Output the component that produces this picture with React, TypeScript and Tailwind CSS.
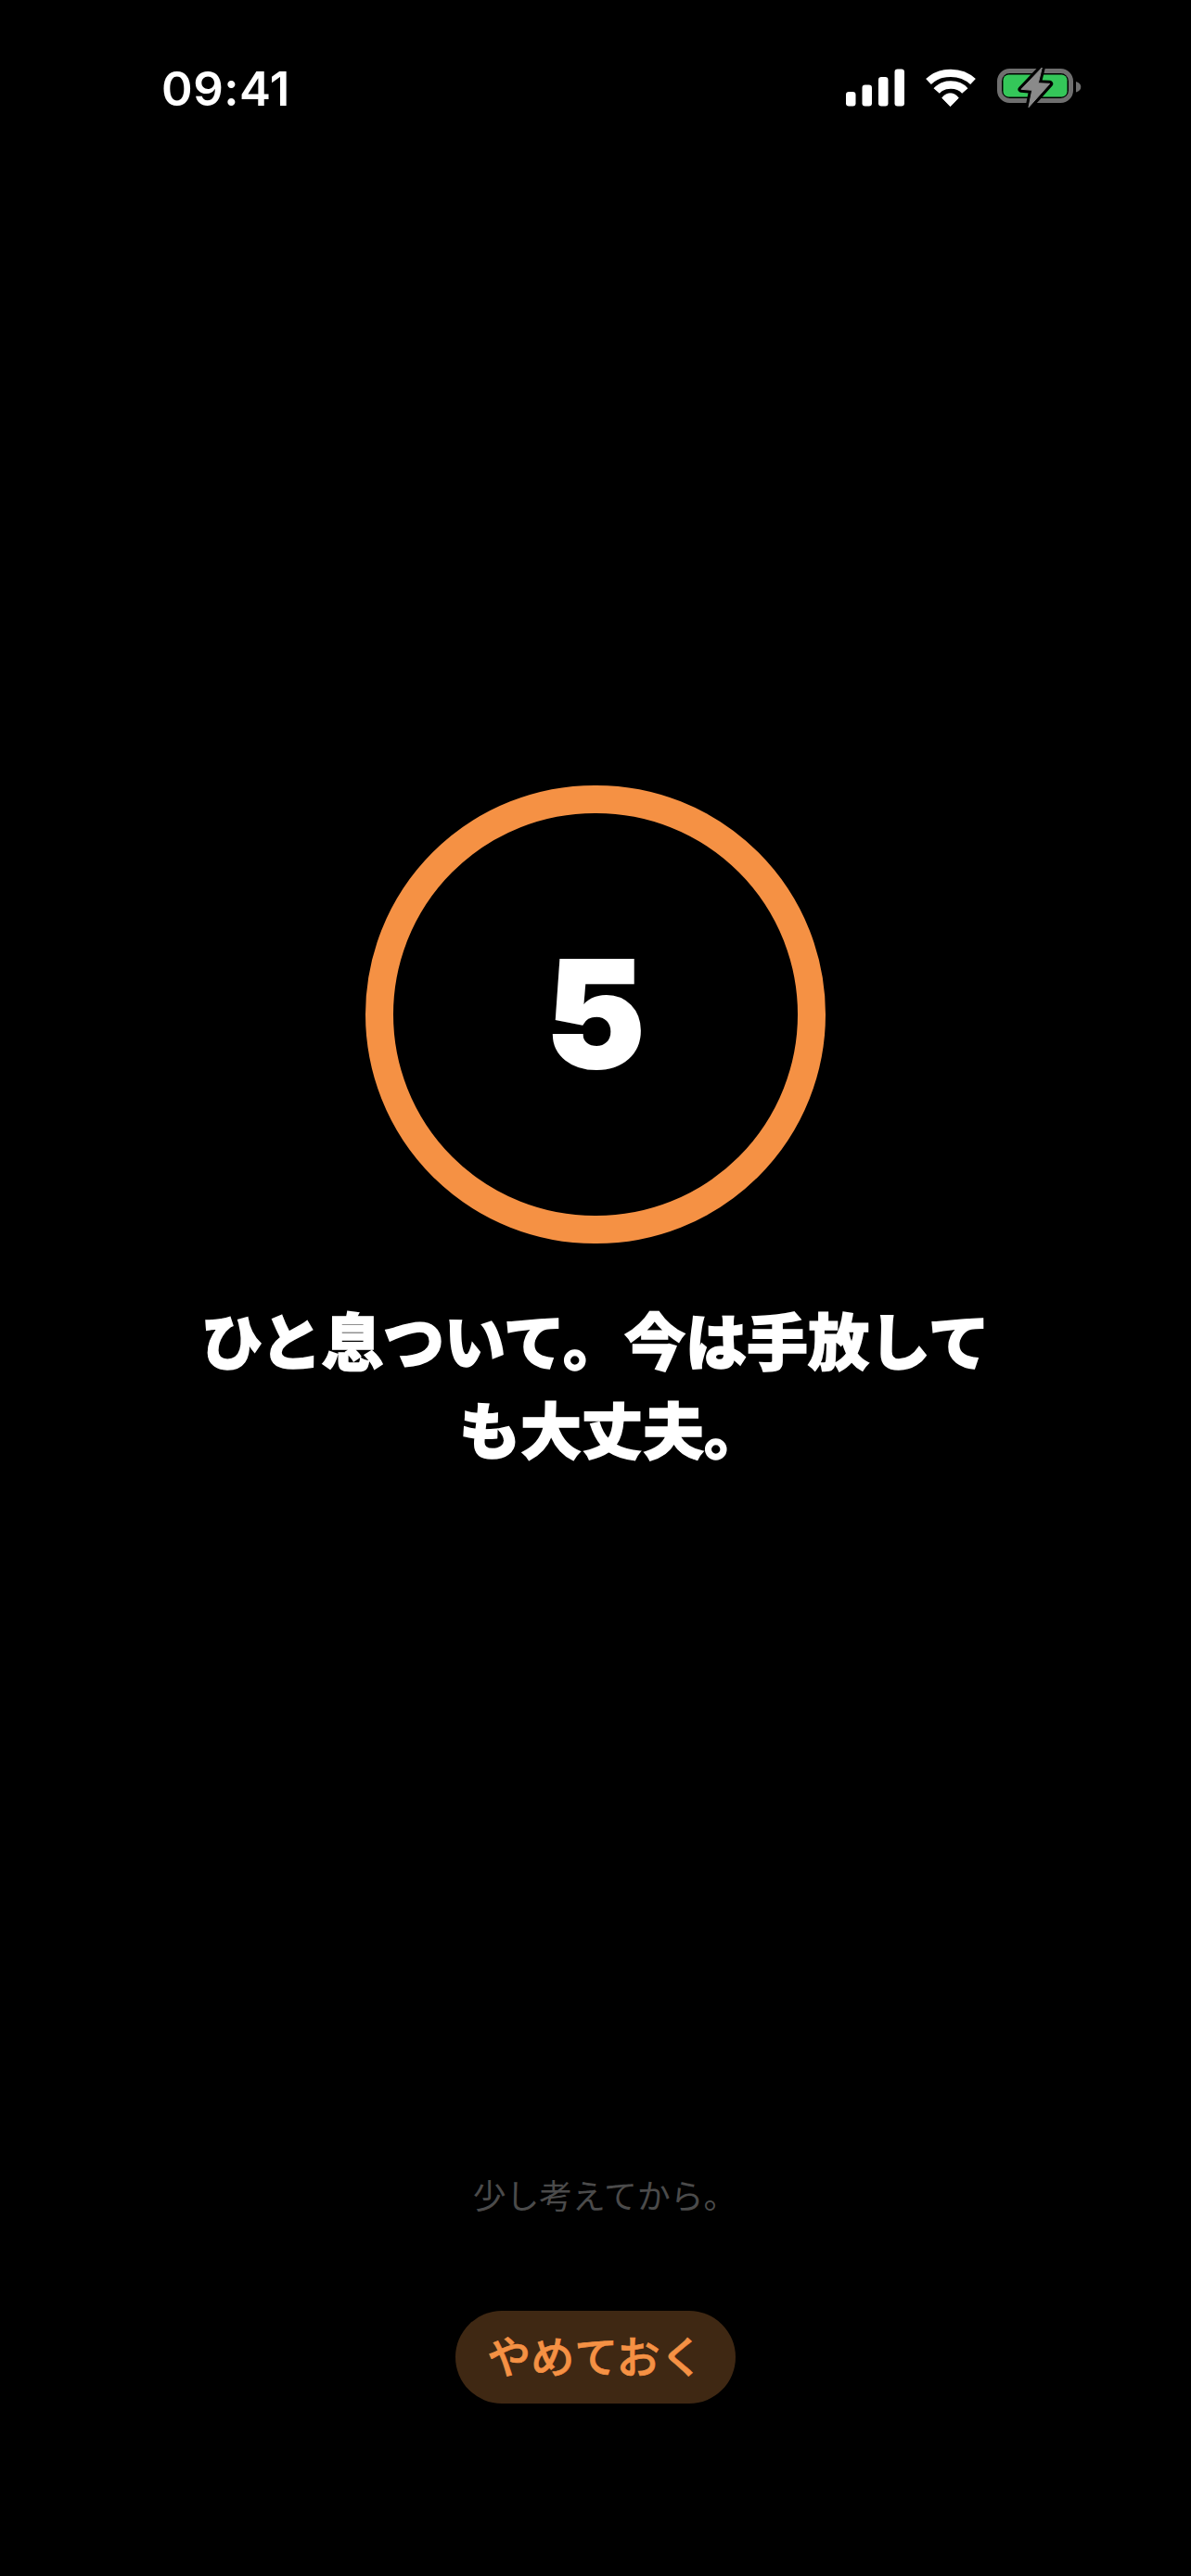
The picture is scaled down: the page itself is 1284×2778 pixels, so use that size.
const jpFont = "font-['Inter','Noto_Sans_CJK_JP',sans-serif]";

function SignalIcon() {
	return (
		<svg width="63" height="41" viewBox="0 0 63 41" fill="#fff">
			<rect x="0" y="25" width="10.5" height="15.5" rx="3.2" />
			<rect x="17.5" y="17.5" width="10.5" height="23" rx="3.2" />
			<rect x="35" y="9" width="10.5" height="31.5" rx="3.2" />
			<rect x="52.5" y="0.5" width="10.5" height="40" rx="3.2" />
		</svg>
	);
}

function WifiIcon() {
	return (
		<svg width="56" height="41" viewBox="0 0 56 41" fill="none">
			<path d="M4 14 C17 1.7 39 1.7 52 14" stroke="#fff" strokeWidth="8.3" />
			<path d="M12.7 24 C20 15.3 36 15.3 43.3 24" stroke="#fff" strokeWidth="8.3" />
			<path
				d="M18.7 31.7 C23 25.1 32 25.1 36.3 31.7 L27.5 40.7 Z"
				fill="#fff"
				stroke="#fff"
				strokeWidth="0.8"
				strokeLinejoin="round"
			/>
		</svg>
	);
}

function BatteryIcon() {
	return (
		<svg width="92" height="44" viewBox="0 0 92 44" fill="none" className="overflow-visible">
			<rect x="2.5" y="2.5" width="77" height="32" rx="11" stroke="#6f6f6f" strokeWidth="5" />
			<rect x="6.5" y="6.5" width="69" height="24" rx="6" fill="#34c759" />
			<path d="M85 14 C88.5 15 90.3 17 90.3 19.8 C90.3 22.6 88.5 24.6 85 25.6 Z" fill="#6f6f6f" />
			<path
				d="M48.3 -1 L26 22.3 L37.7 23.3 L34 41.7 L56.7 16.3 L44.3 15.7 Z"
				stroke="#000"
				strokeWidth="7"
				strokeLinejoin="round"
			/>
			<path
				d="M48.3 -1 L26 22.3 L37.7 23.3 L34 41.7 L56.7 16.3 L44.3 15.7 Z"
				fill="#8a8a8a"
				stroke="#8a8a8a"
				strokeWidth="1"
				strokeLinejoin="round"
			/>
		</svg>
	);
}

export default function App() {
	return (
		<main className={`h-[2778px] w-[1284px] overflow-hidden bg-black text-white ${jpFont}`}>
			<div className="flex items-center justify-between pl-[174px] pr-[117px] pt-[66px]">
				<span className="text-[51px] leading-[60px] font-semibold tracking-[0.5px]">09:41</span>
				<div className="flex items-start">
					<SignalIcon />
					<div className="ml-[22px]">
						<WifiIcon />
					</div>
					<div className="ml-[22px]">
						<BatteryIcon />
					</div>
				</div>
			</div>

			<div className="flex flex-col items-center">
				<div className="mt-[721px] flex h-[494px] w-[496px] items-center justify-center rounded-full border-[30px] border-[#f59144]">
					<span className="-mt-[3px] text-[160px] leading-none font-black [-webkit-text-stroke:2px_#fff]">5</span>
				</div>
				<h1 className="mt-[59px] w-[880px] text-center text-[66px] leading-[96px] font-black [-webkit-text-stroke:1.5px_#fff]">
					ひと息ついて。今は手放して
					<br />
					<span className="ml-[36px]">も大丈夫。</span>
				</h1>
				<p className="mt-[752px] ml-[20px] text-[35.8px] leading-[50px] text-[#4b4b4b]">少し考えてから。</p>
				<button className="mt-[98px] flex h-[100px] w-[302px] items-center justify-center rounded-full bg-[#3f2813] text-[47px] font-medium text-[#f59144] [-webkit-text-stroke:0.7px_#f59144]">
					やめておく
				</button>
			</div>
		</main>
	);
}
